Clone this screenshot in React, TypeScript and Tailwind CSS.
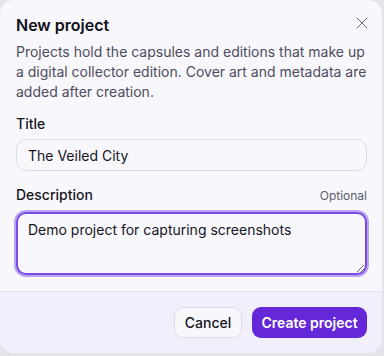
import { X } from 'lucide-react'

export default function App() {
  return (
    <div className="w-[384px] h-[356px] bg-[#e4e3e8]" style={{ fontFamily: 'Inter, "Noto Sans", sans-serif' }}>
      <div className="w-[382px] h-[353px] rounded-[14px] bg-[#f8f7fc] overflow-hidden flex flex-col">
        <div className="pl-4 pr-[15px] pt-[13px] flex-1">
          <div className="flex items-start justify-between">
            <h2 className="text-[16px] font-semibold text-[#111018] leading-[24px]">New project</h2>
            <button className="mr-[-5px] text-[#6b6a78]">
              <X className="w-[20px] h-[20px]" strokeWidth={1.2} />
            </button>
          </div>
          <p className="mt-[5px] text-[14px] leading-[20px] text-[#4d4c5c]">
            Projects hold the capsules and editions that make up a digital collector edition. Cover art and metadata are added after creation.
          </p>

          <label className="block mt-[12px] text-[14px] font-medium text-[#18171f] leading-[20px]">Title</label>
          <input
            readOnly
            value="The Veiled City"
            className="mt-[5px] w-full h-[32px] rounded-[10px] border border-[#dcdae6] bg-[#f8f7fc] px-[11px] text-[14px] text-[#15141c] outline-none"
          />

          <div className="mt-[14px] flex items-end justify-between">
            <label className="text-[14px] font-medium text-[#18171f] leading-[20px]">Description</label>
            <span className="text-[12px] text-[#5b5a6a] leading-[18px]">Optional</span>
          </div>
          <textarea
            readOnly
            value="Demo project for capturing screenshots"
            className="block mt-[7px] w-full h-[63px] rounded-[10px] border-2 border-[#7a4be0] ring-[2px] ring-[#b9a3f3] bg-[#f8f7fc] px-[10px] py-[6px] text-[14px] leading-[20px] text-[#15141c] outline-none resize-y"
          />
        </div>

        <div className="h-[62px] border-t border-[#e3e1ec] bg-[#f1effb] pl-4 pr-[15px] flex items-center justify-end gap-[10px]">
          <button className="h-[31px] w-[68px] rounded-[9px] border border-[#dcdae6] bg-[#f8f7fc] text-[14px] font-medium text-[#15141c]">
            Cancel
          </button>
          <button className="h-[31px] w-[115px] rounded-[9px] bg-[#6428d8] text-[14px] font-semibold text-white">
            Create project
          </button>
        </div>
      </div>
    </div>
  )
}
